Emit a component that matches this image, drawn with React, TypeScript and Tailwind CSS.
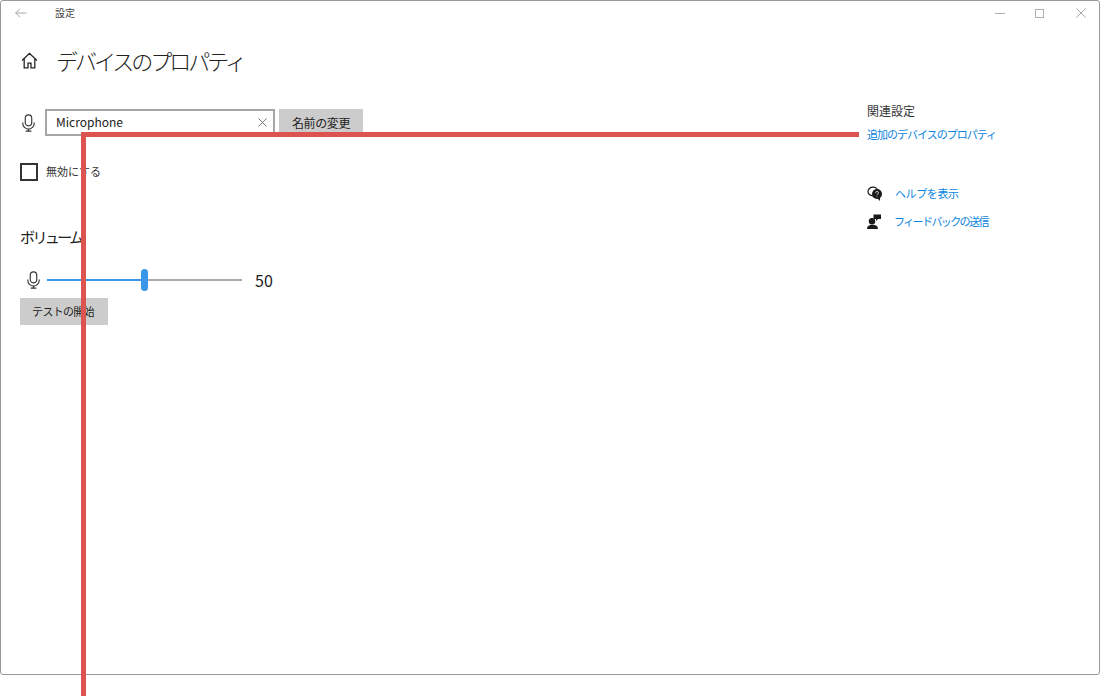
const FONT = "font-['Noto_Sans_CJK_JP','Noto_Sans',sans-serif]"

function MicIcon({ className }: { className: string }) {
  return (
    <svg viewBox="0 0 16 22" fill="none" stroke="currentColor" strokeWidth="1.4" className={className}>
      <rect x="4" y="1" width="8" height="13.5" rx="4" />
      <path d="M1 10.5v1a7 7 0 0 0 14 0v-1" />
      <path d="M8 18.5v2.5M4.5 21h7" />
    </svg>
  )
}

export default function App() {
  return (
    <div className={`relative w-[1100px] h-[696px] bg-white overflow-hidden text-[#1a1a1a] ${FONT}`}>
      <div className="w-[1100px] h-[675px] border border-[#999999] rounded-[3px] flex flex-col">
        {/* title bar */}
        <div className="h-[24px] flex items-center shrink-0">
          <svg viewBox="0 0 12 10" fill="none" stroke="#a8a8a8" strokeWidth="1" className="w-[12px] h-[10px] ml-[14px]">
            <path d="M0.5 5h11M5 0.7 0.7 5 5 9.3" />
          </svg>
          <span className="ml-[28px] mb-[2px] text-[10px] text-[#444444]">設定</span>
          <div className="ml-auto flex items-center mr-[13px]">
            <div className="w-[10px] h-px bg-[#b0b0b0]" />
            <div className="ml-[30px] w-[9px] h-[9px] border border-[#b0b0b0]" />
            <svg viewBox="0 0 10 10" fill="none" stroke="#a8a8a8" strokeWidth="1" className="ml-[32px] w-[10px] h-[10px]">
              <path d="M0.5 0.5l9 9M9.5 0.5l-9 9" />
            </svg>
          </div>
        </div>

        <div className="flex flex-1">
          {/* left column */}
          <div className="w-[866px] shrink-0 pl-[19px]">
            <div className="flex items-center h-[36px] mt-[17px]">
              <svg viewBox="0 0 16 16" fill="none" stroke="#222222" strokeWidth="1.2" className="w-[17px] h-[17px] ml-[1px]">
                <path d="M1 8 8 1.2 15 8M3 6.2V15h3.6v-4.6h2.8V15H13V6.2" />
              </svg>
              <h1 className="ml-[18px] text-[22px] font-light leading-none tracking-[-3px] text-[#222222]">デバイスのプロパティ</h1>
            </div>

            <div className="flex items-center mt-[31px] h-[27px]">
              <MicIcon className="w-[13px] h-[20px] ml-[2px] text-[#333333]" />
              <div className="ml-[10px] w-[230px] h-[27px] border-2 border-[#a6a6a6] flex items-center justify-between pl-[9px] pr-[6px]">
                <span className="mb-[2px] text-[12px] text-[#222222]">Microphone</span>
                <svg viewBox="0 0 10 10" fill="none" stroke="#555555" strokeWidth="0.9" className="w-[9px] h-[9px]">
                  <path d="M0.5 0.5l9 9M9.5 0.5l-9 9" />
                </svg>
              </div>
              <button className="ml-[4px] w-[84px] h-[27px] bg-[#cccccc] text-[12px] tracking-[-0.4px] text-[#222222]">名前の変更</button>
            </div>

            <div className="flex items-center mt-[27px] h-[18px]">
              <div className="w-[18px] h-[18px] border-2 border-[#333333]" />
              <span className="ml-[8px] mb-[2px] text-[11px] text-[#333333]">無効にする</span>
            </div>

            <h2 className="mt-[46px] text-[15px] leading-[20px] tracking-[-2.6px] text-[#222222]">ボリューム</h2>

            <div className="flex items-center mt-[22px] h-[22px]">
              <MicIcon className="w-[13px] h-[20px] ml-[7px] text-[#333333]" />
              <div className="relative ml-[7px] w-[195px] h-[2px] bg-[#ababab]">
                <div className="w-[97px] h-[2px] bg-[#3b96e8]" />
                <div className="absolute left-[94px] top-[-10px] w-[7px] h-[22px] rounded-[4px] bg-[#3b96e8]" />
              </div>
              <span className="ml-[13px] text-[16px] leading-none text-[#222222]">50</span>
            </div>

            <button className="block mt-[7px] w-[88px] h-[27px] pr-[2px] bg-[#cccccc] text-[11px] tracking-[-0.7px] text-[#222222]">テストの開始</button>
          </div>

          {/* right column */}
          <div className="flex-1 pt-[77px]">
            <div className="text-[12px] leading-[18px] text-[#333333]">関連設定</div>
            <a className="block mt-[5px] text-[11px] leading-[18px] tracking-[-1px] text-[#0a84e0]">追加のデバイスのプロパティ</a>
            <div className="flex items-center mt-[41px] h-[18px]">
              <svg viewBox="0 0 16 15" className="w-[16px] h-[15px]">
                <ellipse cx="6" cy="5.5" rx="5" ry="4.3" fill="none" stroke="#1a1a1a" strokeWidth="1.2" />
                <circle cx="10" cy="8" r="5" fill="#1a1a1a" />
                <path d="M10 12l3 3v-4z" fill="#1a1a1a" />
                <path d="M8.6 6.8a1.4 1.4 0 1 1 2 1.3l-.6.5v.6M10 10.6v.6" stroke="#ffffff" strokeWidth="0.8" fill="none" />
              </svg>
              <a className="ml-[12px] text-[11px] tracking-[-0.4px] text-[#0a84e0]">ヘルプを表示</a>
            </div>
            <div className="flex items-center mt-[10px] h-[18px]">
              <svg viewBox="0 0 14 15" className="w-[14px] h-[15px]" fill="#1a1a1a">
                <circle cx="5" cy="7.2" r="3.2" />
                <path d="M0 15c0-3 2-4.300 5.500-4.300s5.500 1.300 5.500 4.300z" />
                <path d="M6.500 0.500H14V5H11L9 7V5H6.500z" />
              </svg>
              <a className="ml-[13px] text-[11px] tracking-[-1.6px] text-[#0a84e0]">フィードバックの送信</a>
            </div>
          </div>
        </div>
      </div>

      {/* red callout */}
      <div className="absolute left-[81px] top-[132px] w-[778px] h-[5px] bg-[#dc5350]" />
      <div className="absolute left-[81px] top-[132px] w-[5px] h-[564px] bg-[#dc5350]" />
    </div>
  )
}
